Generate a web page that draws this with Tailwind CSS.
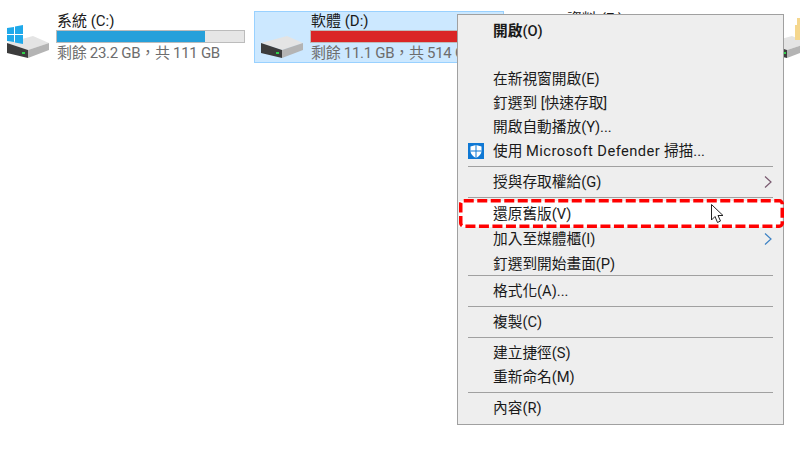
<!DOCTYPE html>
<html lang="zh-Hant">
<head>
<meta charset="UTF-8" />
<title>本機磁碟</title>
<script src="https://cdn.jsdelivr.net/npm/@tailwindcss/browser@4"></script>
</head>
<body class="bg-white w-[800px] h-[452px] overflow-hidden relative font-['Roboto','Noto_Sans_CJK_TC',sans-serif] text-[15px] text-[#1a1a1a]">

<!-- drive tiles -->
<div class="flex gap-1 pt-[11px] w-full overflow-hidden">
    <div class="w-[250px] h-[52px] shrink-0 flex border border-transparent">
        <div class="w-[56px] shrink-0 relative">
            <svg class="absolute left-[5px] top-[12px]" width="46" height="38" viewBox="0 0 46 38">
                <path d="M1 19 L27 12 L43 19 L22 26 Z" fill="#e4e4e4"/>
                <path d="M22 26 L43 19 L43 26 L22 34 Z" fill="#b4b4b4"/>
                <path d="M1 19 L22 26 L22 34 L1 29 Z" fill="#3c3c3c"/>
                <rect x="16" y="28" width="3" height="2" fill="#2fd04a"/>
                <path d="M1 4 L8 3 V10 H1 Z M9 2.5 L17 1 V10 H9 Z M1 11 H8 V18 L1 17 Z M9 11 H17 V20 L9 18.5 Z" fill="#1fa9ea"/>
            </svg>
        </div>
        <div class="flex-1 pr-[5px]">
            <div class="h-[18px] leading-[18px]">系統 (C:)</div>
            <div class="h-[13px] -mx-px bg-[#e6e6e6] border border-[#bcbcbc]">
                <div class="h-full bg-[#26a0da] w-[79%]"></div>
            </div>
            <div class="h-[18px] leading-[18px] mt-px text-[#6d6d6d] tracking-[-0.3px]">剩餘 23.2 GB，共 111 GB</div>
        </div>
    </div>

    <div class="w-[250px] h-[52px] shrink-0 flex bg-[#cce8ff] border border-[#99d1ff]">
        <div class="w-[56px] shrink-0 relative">
            <svg class="absolute left-[5px] top-[12px]" width="46" height="38" viewBox="0 0 46 38">
                <path d="M1 19 L27 12 L43 19 L22 26 Z" fill="#e4e4e4"/>
                <path d="M22 26 L43 19 L43 26 L22 34 Z" fill="#b4b4b4"/>
                <path d="M1 19 L22 26 L22 34 L1 29 Z" fill="#3c3c3c"/>
                <rect x="16" y="28" width="3" height="2" fill="#2fd04a"/>
            </svg>
        </div>
        <div class="flex-1 pr-[5px]">
            <div class="h-[18px] leading-[18px]">軟體 (D:)</div>
            <div class="h-[13px] -mx-px bg-[#da2626] border border-[#bcbcbc]"></div>
            <div class="h-[18px] leading-[18px] mt-px text-[#6d6d6d] tracking-[-0.3px]">剩餘 11.1 GB，共 514 GB</div>
        </div>
    </div>

    <div class="w-[250px] h-[52px] shrink-0 flex border border-transparent">
        <div class="w-[56px] shrink-0"></div>
        <div class="flex-1 pr-[5px] -mt-[2px]">
            <div class="h-[18px] leading-[18px] pl-[2px]">資料 (E:)</div>
        </div>
    </div>

    <div class="w-[250px] h-[52px] shrink-0 flex border border-transparent">
        <div class="w-[56px] shrink-0 relative">
            <svg class="absolute left-[2px] top-[12px] overflow-visible" width="46" height="38" viewBox="0 0 46 38">
                <path d="M1 19 L27 12 L43 19 L22 26 Z" fill="#e4e4e4"/>
                <path d="M22 26 L43 19 L43 26 L22 34 Z" fill="#b4b4b4"/>
                <path d="M1 19 L22 26 L22 34 L1 29 Z" fill="#3c3c3c"/>
                <rect x="19" y="28" width="2" height="2" fill="#2fd04a"/>
                <path d="M32 -6 H40 V1 H42 V16 H30 V1 H32 Z" fill="#f5d78e"/>
            </svg>
        </div>
    </div>
</div>

<!-- context menu -->
<div class="absolute left-[457px] top-[14px] w-[327px] h-[411px] bg-[#eeeeee] border border-[#a0a0a0] pt-1 flex flex-col text-[14.7px]">
    <div class="h-6 leading-6 pl-[35px] font-bold">開啟<span class="font-medium">(O)</span></div>
    <div class="h-6"></div>
    <div class="h-6 leading-6 pl-[35px]">在新視窗開啟(E)</div>
    <div class="h-6 leading-6 pl-[35px]">釘選到 [快速存取]</div>
    <div class="h-6 leading-6 pl-[35px]">開啟自動播放(Y)...</div>
    <div class="h-6 leading-6 pl-[35px] relative">
        <svg class="absolute left-[10px] top-[4px]" width="16" height="16" viewBox="0 0 16 16">
            <rect width="16" height="16" fill="#0f78d4"/>
            <path d="M8 2 L13.5 3.5 V8 C13.5 11 11 13.5 8 15 C5 13.5 2.5 11 2.5 8 V3.5 Z" fill="#fff"/>
            <path d="M7.5 2 h1 v13 h-1 Z M2.5 7.5 h11 v1 h-11 Z" fill="#0f78d4"/>
        </svg>
        使用 <span class="tracking-[0.45px]">Microsoft Defender</span> 掃描...
    </div>
    <div class="h-px bg-[#a0a0a0] mx-[10px] my-[3px]"></div>
    <div class="h-6 leading-6 pl-[35px] relative">
        授與存取權給(G)
        <svg class="absolute right-[10px] top-[5px]" width="10" height="14" viewBox="0 0 10 14"><path d="M2 1.5 L8 7 L2 12.5" fill="none" stroke="#7a5a70" stroke-width="1.2"/></svg>
    </div>
    <div class="h-px bg-[#a0a0a0] mx-[10px] my-[3px]"></div>
    <div class="h-[26px] leading-[26px] pl-[34px] bg-white mx-px relative">
        還原舊版(V)
        <svg class="absolute left-0 -top-[2px]" width="325" height="30" viewBox="0 0 325 30"><rect x="1.75" y="1.75" width="321.5" height="25.5" rx="3" fill="none" stroke="#ff0000" stroke-width="3.5" stroke-dasharray="10 3.5"/></svg>
        <svg class="absolute left-[252px] top-[3px]" width="14" height="20" viewBox="0 0 14 20"><path d="M0.5 0.5 V16 L4 12.5 L6.5 18.5 L9.5 17 L7 11.5 H12 Z" fill="#fff" stroke="#222" stroke-width="1"/></svg>
    </div>
    <div class="h-6 leading-6 pl-[35px] relative">
        加入至媒體櫃(I)
        <svg class="absolute right-[10px] top-[5px]" width="10" height="14" viewBox="0 0 10 14"><path d="M2 1.5 L8 7 L2 12.5" fill="none" stroke="#3d82c4" stroke-width="1.2"/></svg>
    </div>
    <div class="h-6 leading-[26px] pl-[35px]">釘選到開始畫面(P)</div>
    <div class="h-px bg-[#a0a0a0] mx-[10px] mb-[3px]"></div>
    <div class="h-6 leading-6 pl-[35px]">格式化(A)...</div>
    <div class="h-px bg-[#a0a0a0] mx-[10px] my-[3px]"></div>
    <div class="h-6 leading-6 pl-[35px]">複製(C)</div>
    <div class="h-px bg-[#a0a0a0] mx-[10px] my-[3px]"></div>
    <div class="h-6 leading-6 pl-[35px]">建立捷徑(S)</div>
    <div class="h-6 leading-6 pl-[35px]">重新命名(M)</div>
    <div class="h-px bg-[#a0a0a0] mx-[10px] my-[3px]"></div>
    <div class="h-6 leading-6 pl-[35px]">內容(R)</div>
</div>
</body>
</html>
